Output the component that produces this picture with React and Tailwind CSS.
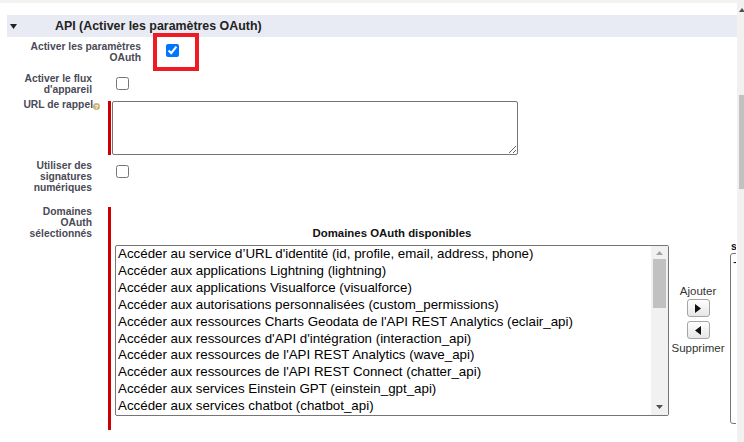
import React from 'react'

const domaines = [
  "Accéder au service d’URL d'identité (id, profile, email, address, phone)",
  "Accéder aux applications Lightning (lightning)",
  "Accéder aux applications Visualforce (visualforce)",
  "Accéder aux autorisations personnalisées (custom_permissions)",
  "Accéder aux ressources Charts Geodata de l'API REST Analytics (eclair_api)",
  "Accéder aux ressources d'API d'intégration (interaction_api)",
  "Accéder aux ressources de l'API REST Analytics (wave_api)",
  "Accéder aux ressources de l'API REST Connect (chatter_api)",
  "Accéder aux services Einstein GPT (einstein_gpt_api)",
  "Accéder aux services chatbot (chatbot_api)",
]

const labelCls =
  "w-[108px] shrink-0 pl-[20px] pr-[16px] text-right text-[10.3px] leading-[11px] font-bold text-[#4a4a56]"

const MoveButton = ({ dir }) => (
  <button className="w-[23px] h-[18px] flex items-center justify-center rounded-[3px] border border-[#a5a5a5] bg-gradient-to-b from-white to-[#e6e6e6]">
    <svg width="6" height="9" viewBox="0 0 6 9">
      {dir === "right" ? (
        <path d="M0 0 L6 4.5 L0 9 Z" fill="#111" />
      ) : (
        <path d="M6 0 L0 4.5 L6 9 Z" fill="#111" />
      )}
    </svg>
  </button>
)

export default function App() {
  return (
    <div
      className="w-[744px] h-[442px] overflow-hidden relative flex bg-white"
      style={{ fontFamily: '"Liberation Sans", Arial, sans-serif' }}
    >
      <div className="w-[737px] shrink-0 flex flex-col">
        <div className="h-[3px] bg-[#f3f3f3]" />

        {/* section header */}
        <div className="mt-[12px] ml-[7px] h-[22px] bg-[#e8ebf3] flex items-center">
          <svg width="7" height="5" viewBox="0 0 7 5" className="ml-[3px]">
            <path d="M0 0 L7 0 L3.5 5 Z" fill="#222" />
          </svg>
          <span className="ml-[38px] text-[12.4px] font-bold text-[#222]">
            API (Activer les paramètres OAuth)
          </span>
        </div>

        {/* Activer les paramètres OAuth */}
        <div className="flex items-start mt-[4px]">
          <div className="w-[153px] shrink-0 pl-[22px] pr-[12px] text-right text-[10.3px] leading-[11px] font-bold text-[#4a4a56]">
            Activer les paramètres OAuth
          </div>
          <div className="pl-[13px] pt-[3px]">
            <div className="relative">
              <input type="checkbox" defaultChecked className="m-0 block w-[13px] h-[13px]" />
              <span className="absolute left-[-13px] top-[-11px] right-[-20px] bottom-[-14px] border-4 border-[#ed1c24] pointer-events-none" />
            </div>
          </div>
        </div>

        {/* Activer le flux d'appareil */}
        <div className="flex items-start mt-[10px]">
          <div className={labelCls}>Activer le flux d'appareil</div>
          <div className="pl-[8px] pt-[4px]">
            <input type="checkbox" className="m-0 block w-[13px] h-[13px]" />
          </div>
        </div>

        {/* URL de rappel */}
        <div className="flex items-start mt-[4px]">
          <div className="w-[108px] shrink-0 pl-[20px] pr-[8px] text-right text-[10.3px] leading-[11px] font-bold text-[#4a4a56] whitespace-nowrap">
            URL de rappel
            <svg width="7" height="7" viewBox="0 0 7 7" className="inline-block align-[-2px]">
              <circle cx="3.5" cy="3.5" r="3.5" fill="#cfb27a" />
              <text x="3.5" y="6" textAnchor="middle" fontSize="6" fontWeight="bold" fill="#fff">?</text>
            </svg>
          </div>
          <div className="flex mt-[2px]">
            <div className="w-[3px] h-[54px] bg-[#c00]" />
            <textarea className="ml-[1px] w-[406px] h-[54px] border border-[#767676] rounded-[2px] bg-white" />
          </div>
        </div>

        {/* Utiliser des signatures numériques */}
        <div className="flex items-start mt-[5px]">
          <div className={labelCls}>Utiliser des signatures numériques</div>
          <div className="pl-[8px] pt-[5px]">
            <input type="checkbox" className="m-0 block w-[13px] h-[13px]" />
          </div>
        </div>

        {/* Domaines OAuth sélectionnés */}
        <div className="flex items-start mt-[13px]">
          <div className={labelCls}>Domaines OAuth sélectionnés</div>
          <div className="flex mt-[1px]">
            <div className="w-[3px] h-[223px] bg-[#c00]" />
            <div className="ml-[4px] flex items-start">
              <div className="w-[554px] flex flex-col">
                <div className="mt-[21px] text-center text-[11.4px] leading-[11px] font-bold text-[#111]">
                  Domaines OAuth disponibles
                </div>
                <div className="mt-[6px] h-[171px] border border-[#767676] rounded-[2px] flex overflow-hidden">
                  <div className="flex-1 pl-[2px] text-[13.33px] leading-[16.9px] text-black whitespace-nowrap overflow-hidden">
                    {domaines.map((d) => (
                      <div key={d}>{d}</div>
                    ))}
                  </div>
                  <div className="w-[17px] bg-[#f1f1f1] flex flex-col items-center">
                    <svg width="7" height="4" viewBox="0 0 7 4" className="mt-[5px]">
                      <path d="M0 4 L3.5 0 L7 4 Z" fill="#a3a3a3" />
                    </svg>
                    <div className="mt-[4px] w-[13px] h-[49px] bg-[#c1c1c1]" />
                    <div className="flex-1" />
                    <svg width="7" height="4" viewBox="0 0 7 4" className="mb-[6px]">
                      <path d="M0 0 L7 0 L3.5 4 Z" fill="#505050" />
                    </svg>
                  </div>
                </div>
              </div>

              <div className="w-[58px] mt-[78px] flex flex-col items-center text-[11.5px] leading-[13px] text-[#333]">
                <span>Ajouter</span>
                <div className="mt-[1px] flex flex-col gap-[4px]">
                  <MoveButton dir="right" />
                  <MoveButton dir="left" />
                </div>
                <span className="mt-[3px]">Supprimer</span>
              </div>

              <div className="ml-[3px] w-[6px] flex flex-col overflow-hidden">
                <div className="mt-[34px] pl-[1px] text-[10.5px] leading-[11px] font-bold text-[#111] whitespace-nowrap">
                  s
                </div>
                <div className="mt-[1px] h-[171px] w-[20px] border border-[#767676] rounded-[3px] pl-[2px] text-[13.33px] leading-[16.9px] whitespace-nowrap">
                  -
                </div>
              </div>
            </div>
          </div>
        </div>
      </div>

      {/* page scrollbar */}
      <div className="w-[7px] shrink-0 bg-[#f1f1f1] flex flex-col">
        <svg width="7" height="5" viewBox="0 0 7 5" className="mt-[8px]">
          <path d="M2 4 L5 0 L8 4 Z" fill="#505050" />
        </svg>
        <div className="mt-[82px] ml-[2px] w-[5px] h-[94px] bg-[#c1c1c1]" />
      </div>
    </div>
  )
}
